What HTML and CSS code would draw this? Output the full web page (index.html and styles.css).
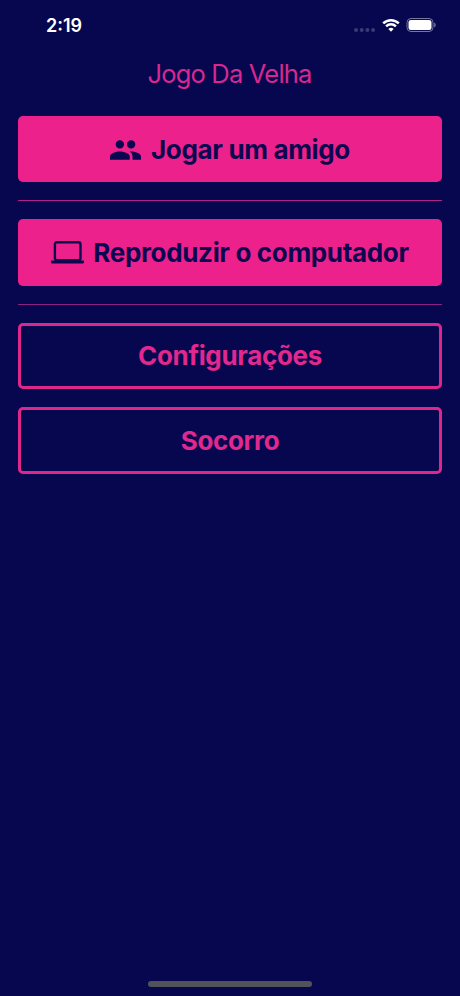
FILE: index.html
```html
<!DOCTYPE html>
<html lang="pt">
<head>
<meta charset="utf-8">
<title>Jogo Da Velha</title>
<link rel="stylesheet" href="styles.css">
</head>
<body>
<div class="screen">
  <header class="status">
    <span class="time">2:19</span>
    <div class="indicators">
      <svg class="signal" viewBox="0 0 22 4"><circle cx="2" cy="2" r="2"/><circle cx="7.7" cy="2" r="2"/><circle cx="13.4" cy="2" r="2"/><circle cx="19.1" cy="2" r="2"/></svg>
      <svg class="wifi" viewBox="0 0 18 14"><path d="M1.2 5.3a11.2 11.2 0 0 1 15.6 0M4.1 8.3a7 7 0 0 1 9.8 0"/><path class="wifi-dot" d="M6.4 10.9a3.8 3.8 0 0 1 5.2 0L9 13.7z"/></svg>
      <svg class="battery" viewBox="0 0 30 14"><rect class="shell" x="1" y=".5" width="26" height="13" rx="4"/><rect x="2.5" y="2" width="23" height="10" rx="2.5"/><path class="tip" d="M28.2 4.6c2 .8 2 4 0 4.8z"/></svg>
    </div>
  </header>
  <h1 class="title"><span>Jogo Da Velha</span></h1>
  <main class="menu">
    <button class="btn solid"><svg class="people" viewBox="1 5 22 14"><path d="M16 11c1.66 0 2.99-1.34 2.99-3S17.66 5 16 5s-3 1.34-3 3 1.34 3 3 3zm-8 0c1.66 0 2.99-1.34 2.99-3S9.66 5 8 5 5 6.34 5 8s1.34 3 3 3zm0 2c-2.33 0-7 1.17-7 3.5V19h14v-2.5c0-2.33-4.67-3.5-7-3.5zm8 0c-.29 0-.62.02-.97.05 1.16.84 1.97 1.97 1.97 3.45V19h6v-2.5c0-2.33-4.67-3.5-7-3.5z"/></svg><span>Jogar um amigo</span></button>
    <hr class="rule">
    <button class="btn solid raised"><svg class="laptop" viewBox="0 0 33 23"><rect class="lid" x="3.9" y="1.2" width="25.6" height="18" rx="2"/><path d="M0 19.6h33v1.6a1.2 1.2 0 0 1-1.2 1.2H1.2A1.2 1.2 0 0 1 0 21.2z"/></svg><span>Reproduzir o computador</span></button>
    <hr class="rule faint">
    <button class="btn outline"><span>Configurações</span></button>
    <button class="btn outline"><span>Socorro</span></button>
  </main>
  <div class="home-bar"></div>
</div>
</body>
</html>
```
FILE: styles.css
```css
* { box-sizing: border-box; }
body { margin: 0; background: #06074f; font-family: Inter, sans-serif; }
.screen { height: 996px; display: flex; flex-direction: column; }
.status { height: 50px; padding: 0 24px 0 46px; display: flex; align-items: center; justify-content: space-between; }
.time { padding-top: 2px; color: #fff; font-size: 18px; font-weight: 600; line-height: 22px; }
.indicators { display: flex; align-items: center; gap: 6px; fill: #fff; }
.signal { width: 22px; height: 4px; margin: 9px 0 0; fill: #393a76; }
.wifi { width: 18px; height: 14px; fill: none; stroke: #fff; stroke-width: 2.5; }
.wifi-dot { fill: #fff; stroke: none; }
.battery { width: 30px; height: 14px; }
.shell { fill: none; stroke: #77789f; }
.tip { fill: #77789f; }
.title { margin: 0; height: 50px; padding-bottom: 3px; display: flex; align-items: center; justify-content: center; color: #d92790; font-size: 25.5px; font-weight: 400; letter-spacing: -.8px; white-space: nowrap; }
.title span { margin-left: -1px; }
.menu { padding: 16px 18px 0; display: flex; flex-direction: column; gap: 18px; }
.btn { height: 66.4px; margin: 0; padding: 2px 0 0; border: 0; border-radius: 5px; display: flex; align-items: center; justify-content: center; font: 700 26px/32px Inter, sans-serif; letter-spacing: -.34px; white-space: nowrap; }
.solid { background: #ed218c; color: #0b0751; fill: #0b0751; }
.raised { padding-top: 0; }
.outline { padding-top: 1px; border: 3.5px solid #de278c; background: transparent; color: #e0288f; }
.rule { width: 100%; height: 1px; margin: 0; border: 0; background: #b22288; }
.faint { background: #8c2084; }
.people { width: 31px; height: 20px; margin: -1px 10px 0 0; }
.laptop { width: 33px; height: 23px; margin: -1px 9px 0 0; }
.lid { fill: none; stroke: #0b0751; stroke-width: 2.4; }
.home-bar { width: 164px; height: 6px; margin: auto auto 9px; border-radius: 3px; background: #50545a; }
```
